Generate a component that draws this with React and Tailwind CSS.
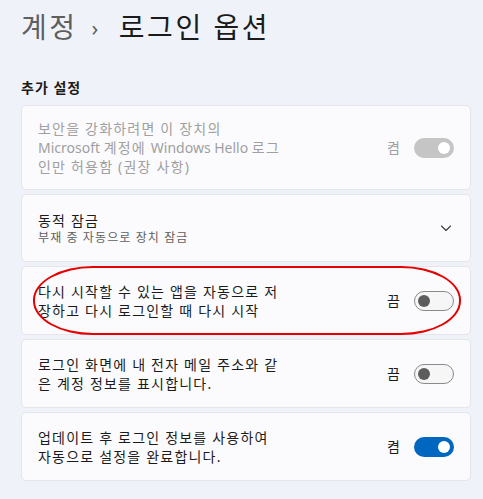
import React from "react";

const font = { fontFamily: '"Noto Sans", "Noto Sans CJK KR", sans-serif' };

const Latin = ({ children }) => (
  <span className="tracking-normal">{children}</span>
);

const Toggle = ({ state }) => {
  if (state === "disabled") {
    return (
      <div className="w-[40px] h-[20px] rounded-full bg-[#c5c5c5] flex items-center justify-end pr-[4px]">
        <div className="w-[12px] h-[12px] rounded-full bg-white" />
      </div>
    );
  }
  if (state === "on") {
    return (
      <div className="w-[40px] h-[20px] rounded-full bg-[#0067c0] flex items-center justify-end pr-[4px]">
        <div className="w-[12px] h-[12px] rounded-full bg-white" />
      </div>
    );
  }
  return (
    <div className="w-[40px] h-[20px] rounded-full border border-[#8a8a8a] bg-[#f6f6f6] flex items-center pl-[3px]">
      <div className="w-[12px] h-[12px] rounded-full bg-[#5c5c5c]" />
    </div>
  );
};

const ToggleRow = ({ lines, label, state, height, disabled, children }) => (
  <div
    className={`relative flex items-center justify-between bg-[#fbfbfd] border border-[#e3e5ea] rounded-[5px] pl-[16px] pr-[16px] ${height}`}
  >
    <div
      className={`text-[14px] leading-[19px] tracking-[1.2px] ${
        disabled ? "text-[#a0a0a0]" : "text-[#1b1b1b]"
      }`}
    >
      {lines.map((l, i) => (
        <div key={i} className="whitespace-nowrap">
          {l}
        </div>
      ))}
    </div>
    <div className="flex items-center gap-[14px]">
      <span
        className={`text-[14px] ${
          disabled ? "text-[#a0a0a0]" : "text-[#1b1b1b]"
        }`}
      >
        {label}
      </span>
      <Toggle state={state} />
    </div>
    {children}
  </div>
);

export default function App() {
  return (
    <div
      className="w-[483px] h-[499px] bg-[#eff3f9] pl-[21px] pr-[12px] pt-[7px] overflow-hidden"
      style={font}
    >
      <div className="flex items-center h-[40px] text-[28px] leading-[40px] tracking-[2.5px]">
        <span className="text-[#5f5f5f]">계정</span>
        <span className="text-[#5f5f5f] text-[22px] ml-[14px] mr-[18px]">›</span>
        <span className="text-[#1b1b1b]">로그인 옵션</span>
      </div>

      <div className="mt-[31px] text-[14px] leading-[20px] font-bold tracking-[1px] text-[#1b1b1b]">
        추가 설정
      </div>

      <div className="mt-[7px] flex flex-col gap-[4px]">
        <ToggleRow
          height="h-[85px]"
          disabled
          label="켬"
          state="disabled"
          lines={[
            "보안을 강화하려면 이 장치의",
            <>
              <Latin>Microsoft </Latin>계정에 <Latin>Windows Hello </Latin>로그
            </>,
            "인만 허용함 (권장 사항)",
          ]}
        />

        <div className="flex items-center justify-between bg-[#fbfbfd] border border-[#e3e5ea] rounded-[5px] pl-[16px] pr-[18px] h-[68px]">
          <div className="pt-[1px]">
            <div className="text-[14px] leading-[19px] tracking-[1.2px] text-[#1b1b1b]">
              동적 잠금
            </div>
            <div className="text-[12px] leading-[16px] tracking-[1.1px] text-[#5f5f5f]">
              부재 중 자동으로 장치 잠금
            </div>
          </div>
          <svg width="12" height="12" viewBox="0 0 12 12" fill="none">
            <path
              d="M1.5 4 L6 8.5 L10.5 4"
              stroke="#3b3b3b"
              strokeWidth="1.1"
              strokeLinecap="round"
              strokeLinejoin="round"
            />
          </svg>
        </div>

        <ToggleRow
          height="h-[69px]"
          label="끔"
          state="off"
          lines={[
            "다시 시작할 수 있는 앱을 자동으로 저",
            "장하고 다시 로그인할 때 다시 시작",
          ]}
        >
          <div className="absolute left-[11px] right-[9px] -top-[1px] -bottom-[1px] rounded-[60px_/_34px] border-2 border-[#e60000] pointer-events-none" />
        </ToggleRow>

        <ToggleRow
          height="h-[69px]"
          label="끔"
          state="off"
          lines={[
            "로그인 화면에 내 전자 메일 주소와 같",
            "은 계정 정보를 표시합니다.",
          ]}
        />

        <ToggleRow
          height="h-[69px]"
          label="켬"
          state="on"
          lines={[
            "업데이트 후 로그인 정보를 사용하여",
            "자동으로 설정을 완료합니다.",
          ]}
        />
      </div>
    </div>
  );
}
